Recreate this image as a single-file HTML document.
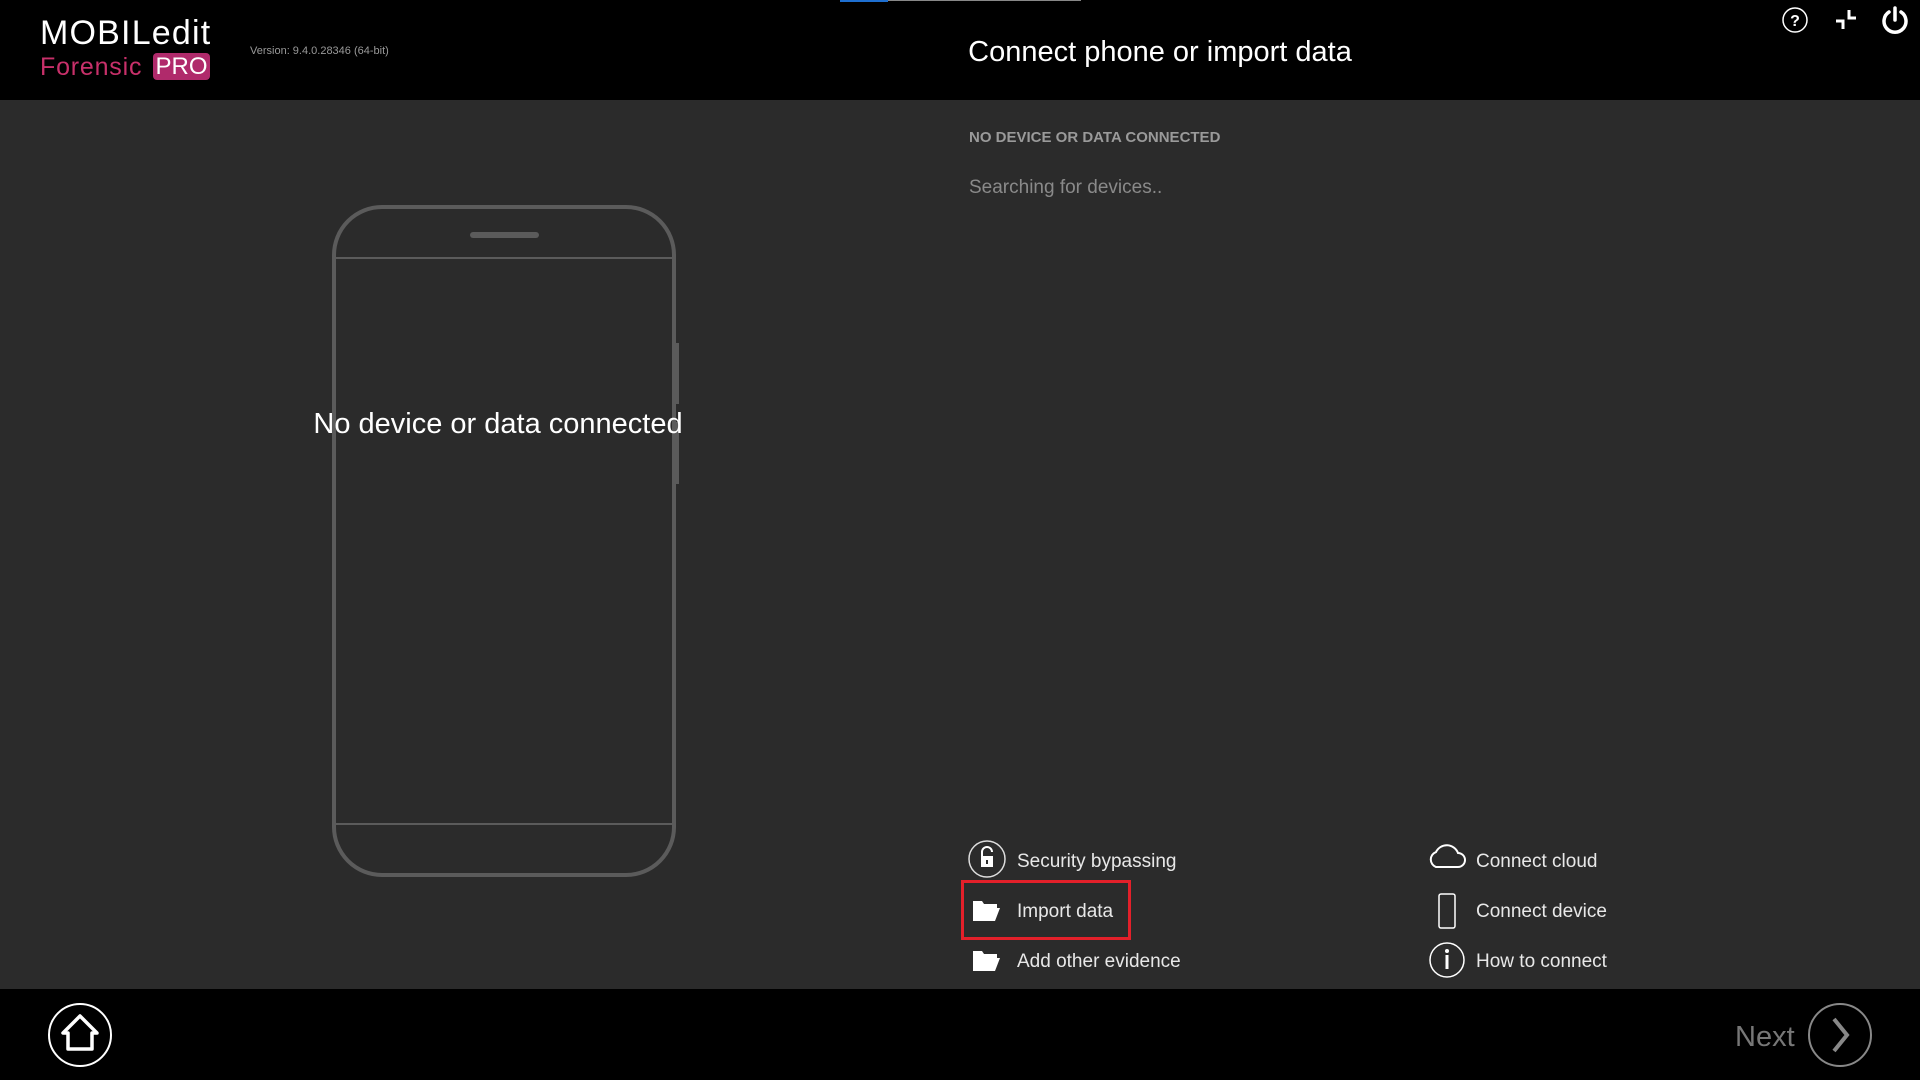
<!DOCTYPE html>
<html><head><meta charset="utf-8"><style>
*{margin:0;padding:0;box-sizing:border-box}
body{width:1920px;height:1080px;background:#2b2b2b;font-family:"Liberation Sans",sans-serif;position:relative;overflow:hidden;color:#fff}
.hdr{position:absolute;left:0;top:0;width:1920px;height:100px;background:#000}
.ftr{position:absolute;left:0;top:989px;width:1920px;height:91px;background:#000}
.a{position:absolute;white-space:nowrap}
.lk{font-size:19px;color:#e8e8e8}
</style></head><body>
<div class="hdr"></div>
<div class="a" style="left:840px;top:0;width:48px;height:2px;background:#1e6fd0"></div>
<div class="a" style="left:888px;top:0;width:193px;height:1px;background:#888"></div>
<div class="a" style="left:40px;top:14px;font-size:34px;letter-spacing:1.2px;color:#fff">MOBILedit</div>
<div class="a" style="left:40px;top:53px;font-size:25px;color:#c8306a;letter-spacing:0.8px">Forensic</div>
<div class="a" style="left:153px;top:53px;width:57px;height:27px;background:#b02a6b;border-radius:4px;font-size:24px;color:#fff;text-align:center;line-height:27px">PRO</div>
<div class="a" style="left:250px;top:45px;font-size:11px;color:#999">Version: 9.4.0.28346 (64-bit)</div>
<div class="a" style="left:0;width:2320px;top:36px;font-size:29px;text-align:center;color:#fff">Connect phone or import data</div>
<svg class="a" style="left:1780px;top:5px" width="140" height="34" viewBox="0 0 140 34">
<circle cx="15" cy="15" r="12" fill="none" stroke="#fff" stroke-width="1.5"/>
<text x="15" y="21" font-size="16" font-weight="bold" fill="#fff" text-anchor="middle" font-family="Liberation Sans">?</text>
<path d="M56 16h7v8M76 13h-7v-8" fill="none" stroke="#fff" stroke-width="3"/>
<path d="M109 7a11 11 0 1 0 12 0M115 3v12" fill="none" stroke="#fff" stroke-width="3.5" stroke-linecap="round"/>
</svg>
<svg class="a" style="left:325px;top:200px" width="360" height="685">
<rect x="9" y="7" width="340" height="668" rx="48" fill="none" stroke="#5b5b5b" stroke-width="4"/>
<line x1="11" y1="58" x2="347" y2="58" stroke="#5b5b5b" stroke-width="2"/>
<line x1="11" y1="624" x2="347" y2="624" stroke="#5b5b5b" stroke-width="2"/>
<line x1="148" y1="35" x2="211" y2="35" stroke="#5b5b5b" stroke-width="6" stroke-linecap="round"/>
<rect x="349" y="143" width="5" height="61" fill="#5b5b5b"/>
<rect x="349" y="222" width="5" height="62" fill="#5b5b5b"/>
</svg>
<div class="a" style="left:0;width:996px;top:408px;font-size:29px;text-align:center;color:#fff">No device or data connected</div>
<div class="a" style="left:969px;top:129px;font-size:15px;font-weight:bold;color:#9a9a9a">NO DEVICE OR DATA CONNECTED</div>
<div class="a" style="left:969px;top:177px;font-size:19px;color:#8a8a8a">Searching for devices..</div>
<svg class="a" style="left:965px;top:840px" width="520" height="140">
<circle cx="22" cy="19" r="18" fill="none" stroke="#ddd" stroke-width="1.5"/>
<path d="M17 16v-4a5 5 0 0 1 10 0" fill="none" stroke="#fff" stroke-width="2"/><rect x="16" y="16" width="12" height="11" fill="#fff"/><rect x="21" y="20" width="2" height="4" fill="#2b2b2b"/>
<path d="M8 81v-20h9l2 3h13v4H14l-6 13zM8 81l6-13h21l-5 13z" fill="#fff"/>
<path d="M8 131v-20h9l2 3h13v4H14l-6 13zM8 131l6-13h21l-5 13z" fill="#fff"/>
<path d="M471 27h22a7 7 0 0 0 0-14a12 12 0 0 0-22-1a8 8 0 0 0 0 15z" fill="none" stroke="#fff" stroke-width="2"/>
<rect x="474" y="54" width="16" height="34" rx="2" fill="none" stroke="#fff" stroke-width="1.5"/>
<circle cx="482" cy="120" r="17" fill="none" stroke="#fff" stroke-width="1.5"/>
<circle cx="482" cy="111" r="2" fill="#fff"/><rect x="480.5" y="115" width="3" height="14" fill="#fff"/>
</svg>
<div class="a lk" style="left:1017px;top:851px">Security bypassing</div>
<div class="a lk" style="left:1017px;top:901px">Import data</div>
<div class="a lk" style="left:1017px;top:951px">Add other evidence</div>
<div class="a lk" style="left:1476px;top:851px">Connect cloud</div>
<div class="a lk" style="left:1476px;top:901px">Connect device</div>
<div class="a lk" style="left:1476px;top:951px">How to connect</div>
<div class="a" style="left:961px;top:880px;width:170px;height:60px;border:3px solid #e3202a"></div>
<div class="ftr"></div>
<svg class="a" style="left:46px;top:1001px" width="70" height="70">
<circle cx="34" cy="34" r="31" fill="none" stroke="#fff" stroke-width="2"/>
<path d="M34 15L17 32h5v16h24V32h5z" fill="none" stroke="#fff" stroke-width="3.5" stroke-linejoin="round"/>
</svg>
<div class="a" style="left:1735px;top:1021px;font-size:29px;color:#777">Next</div>
<svg class="a" style="left:1806px;top:1001px" width="70" height="70">
<circle cx="34" cy="34" r="31" fill="none" stroke="#888" stroke-width="2"/>
<path d="M28 18l13 16-13 16" fill="none" stroke="#888" stroke-width="4"/>
</svg>
</body></html>
